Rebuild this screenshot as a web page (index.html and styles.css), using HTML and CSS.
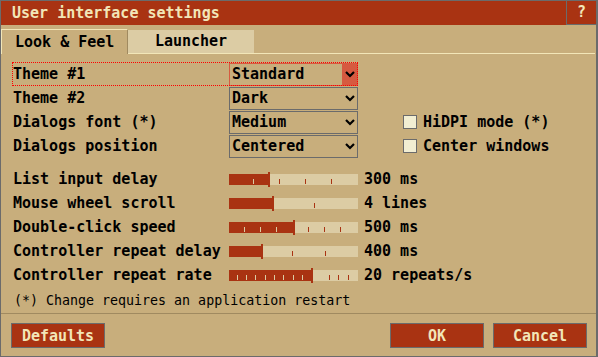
FILE: index.html
```html
<!DOCTYPE html>
<html>
<head>
  <meta charset="utf-8"/>
  <title>User interface settings</title>
  <link rel="stylesheet" href="styles.css">
</head>
<body>
  <div class="dialog">
    <div class="titlebar">
      <span class="title">User interface settings</span>
      <span class="help">?</span>
    </div>

    <div class="tabs">
      <div class="tab active">Look &amp; Feel</div>
      <div class="tab">Launcher</div>
      <div class="tabrest"></div>
    </div>

    <!-- Theme and dialog options -->
    <div class="options">
      <div class="row focused">
        <label class="name">Theme #1</label>
        <div class="select hot"><span>Standard</span><span class="arrow"><svg width="10" height="7" viewBox="0 0 10 7"><polyline points="1,1 5,5 9,1" fill="none" stroke="#000" stroke-width="2.2"/></svg></span></div>
      </div>
      <div class="row">
        <label class="name">Theme #2</label>
        <div class="select"><span>Dark</span><span class="arrow"><svg width="10" height="7" viewBox="0 0 10 7"><polyline points="1,1 5,5 9,1" fill="none" stroke="#000" stroke-width="2.2"/></svg></span></div>
      </div>
      <div class="row">
        <label class="name">Dialogs font (*)</label>
        <div class="select"><span>Medium</span><span class="arrow"><svg width="10" height="7" viewBox="0 0 10 7"><polyline points="1,1 5,5 9,1" fill="none" stroke="#000" stroke-width="2.2"/></svg></span></div>
        <div class="check"><span class="box"></span>HiDPI mode (*)</div>
      </div>
      <div class="row">
        <label class="name">Dialogs position</label>
        <div class="select"><span>Centered</span><span class="arrow"><svg width="10" height="7" viewBox="0 0 10 7"><polyline points="1,1 5,5 9,1" fill="none" stroke="#000" stroke-width="2.2"/></svg></span></div>
        <div class="check"><span class="box"></span>Center windows</div>
      </div>
    </div>

    <!-- Sliders -->
    <div class="sliders">
      <div class="row">
        <label class="name">List input delay</label>
        <div class="slider">
          <div class="fill" style="width:39px"></div>
          <i class="tick on" style="left:24px"></i><i class="tick" style="left:50px"></i><i class="tick" style="left:76px"></i><i class="tick" style="left:102px"></i>
        </div>
        <span class="value">300 ms</span>
      </div>
      <div class="row">
        <label class="name">Mouse wheel scroll</label>
        <div class="slider">
          <div class="fill" style="width:43px"></div>
          <i class="tick" style="left:85px"></i>
        </div>
        <span class="value">4 lines</span>
      </div>
      <div class="row">
        <label class="name">Double-click speed</label>
        <div class="slider">
          <div class="fill" style="width:64px"></div>
          <i class="tick on" style="left:15px"></i><i class="tick on" style="left:31px"></i><i class="tick on" style="left:47px"></i><i class="tick" style="left:79px"></i><i class="tick" style="left:95px"></i><i class="tick" style="left:111px"></i>
        </div>
        <span class="value">500 ms</span>
      </div>
      <div class="row">
        <label class="name">Controller repeat delay</label>
        <div class="slider">
          <div class="fill" style="width:32px"></div>
          <i class="tick" style="left:63px"></i><i class="tick" style="left:96px"></i>
        </div>
        <span class="value">400 ms</span>
      </div>
      <div class="row">
        <label class="name">Controller repeat rate</label>
        <div class="slider">
          <div class="fill" style="width:82px"></div>
          <i class="tick on" style="left:8px"></i><i class="tick on" style="left:17px"></i><i class="tick on" style="left:26px"></i><i class="tick on" style="left:36px"></i><i class="tick on" style="left:45px"></i><i class="tick on" style="left:54px"></i><i class="tick on" style="left:64px"></i><i class="tick on" style="left:73px"></i><i class="tick" style="left:100px"></i><i class="tick" style="left:109px"></i><i class="tick" style="left:119px"></i>
        </div>
        <span class="value">20 repeats/s</span>
      </div>
    </div>

    <div class="note">(*) Change requires an application restart</div>

    <div class="footer">
      <button class="button">Defaults</button>
      <div class="spacer"></div>
      <button class="button">OK</button>
      <button class="button">Cancel</button>
    </div>
  </div>
</body>
</html>
```

FILE: styles.css
```css
body {
  margin: 0;
  font-family: "DejaVu Sans Mono", "Liberation Mono", monospace;
  font-size: 15px;
  font-weight: bold;
}

.dialog {
  width: 598px;
  height: 357px;
  box-sizing: border-box;
  background: #c8ae7c;
  border: 1px solid #6b6b6b;
  border-right-width: 2px;
  display: flex;
  flex-direction: column;
}

/* title bar */
.titlebar {
  height: 24px;
  background: #a93312;
  color: #f2e6b8;
  display: flex;
  align-items: center;
}
.title {
  padding-left: 11px;
  flex: 1;
}
.help {
  width: 30px;
  height: 24px;
  box-sizing: border-box;
  border-left: 1px solid #6b6b6b;
  border-bottom: 1px solid #6b6b6b;
  text-align: center;
  line-height: 23px;
}

/* tabs */
.tabs {
  display: flex;
  margin-top: 4px;
  height: 25px;
}
.tab {
  width: 126px;
  box-sizing: border-box;
  text-align: center;
  line-height: 23px;
  margin-top: 1px;
  background: #dccca4;
  border-bottom: 1px solid #f2e6b8;
}
.tab.active {
  margin-top: 0;
  width: 127px;
  background: #c8ae7c;
  border-top: 1px solid #f2e6b8;
  border-left: 1px solid #f2e6b8;
  border-right: 1px solid #a08a60;
  border-bottom: none;
  text-align: left;
  padding-left: 13px;
  line-height: 24px;
}
.tabrest {
  flex: 1;
  border-bottom: 1px solid #f2e6b8;
  margin-right: 1px;
}

/* rows */
.options {
  margin-top: 8px;
  padding-left: 11px;
}
.sliders {
  margin-top: 9px;
  padding-left: 11px;
}
.row {
  display: flex;
  align-items: center;
  height: 24px;
  width: fit-content;
}
.row.focused {
  outline: 1px dotted #ff0000;
  outline-offset: -1px;
}
.name {
  width: 216px;
  padding-left: 1px;
  color: #000;
}

.select {
  width: 129px;
  height: 23px;
  box-sizing: border-box;
  border: 1px solid #6b6b6b;
  display: flex;
  align-items: center;
  justify-content: space-between;
  padding-left: 2px;
}
.select.hot {
  border-color: #d65a40;
}
.arrow {
  width: 15px;
  height: 21px;
  display: flex;
  align-items: center;
  justify-content: center;
}
.select.hot .arrow {
  background: #d65a40;
}

.check {
  display: flex;
  align-items: center;
  margin-left: 45px;
}
.box {
  width: 14px;
  height: 14px;
  box-sizing: border-box;
  border: 1px solid #6b6b6b;
  background: #f2eed2;
  margin-right: 6px;
}

/* sliders */
.slider {
  position: relative;
  width: 129px;
  height: 11px;
  background: #dccca4;
}
.fill {
  height: 11px;
  background: #a93312;
  border-right: 2px solid #a93312;
  position: relative;
}
.fill::after {
  content: "";
  position: absolute;
  right: -2px;
  top: -2px;
  width: 2px;
  height: 15px;
  background: #a93312;
}
.tick {
  position: absolute;
  top: 5px;
  width: 1px;
  height: 5px;
  background: #a93312;
}
.tick.on {
  background: #dccca4;
}
.value {
  margin-left: 6px;
}

.note {
  font-size: 13.3px;
  font-weight: normal;
  padding-left: 13px;
  height: 26px;
  line-height: 28px;
  border-bottom: 1px solid #a08a60;
}

/* buttons */
.footer {
  display: flex;
  padding: 9px 9px 0 10px;
  gap: 9px;
}
.spacer {
  flex: 1;
}
.button {
  width: 94px;
  height: 25px;
  border: 1px solid #6b6b6b;
  background: #a93312;
  color: #f2e6b8;
  font-family: inherit;
  font-size: 15px;
  font-weight: bold;
  padding: 0;
}
```
